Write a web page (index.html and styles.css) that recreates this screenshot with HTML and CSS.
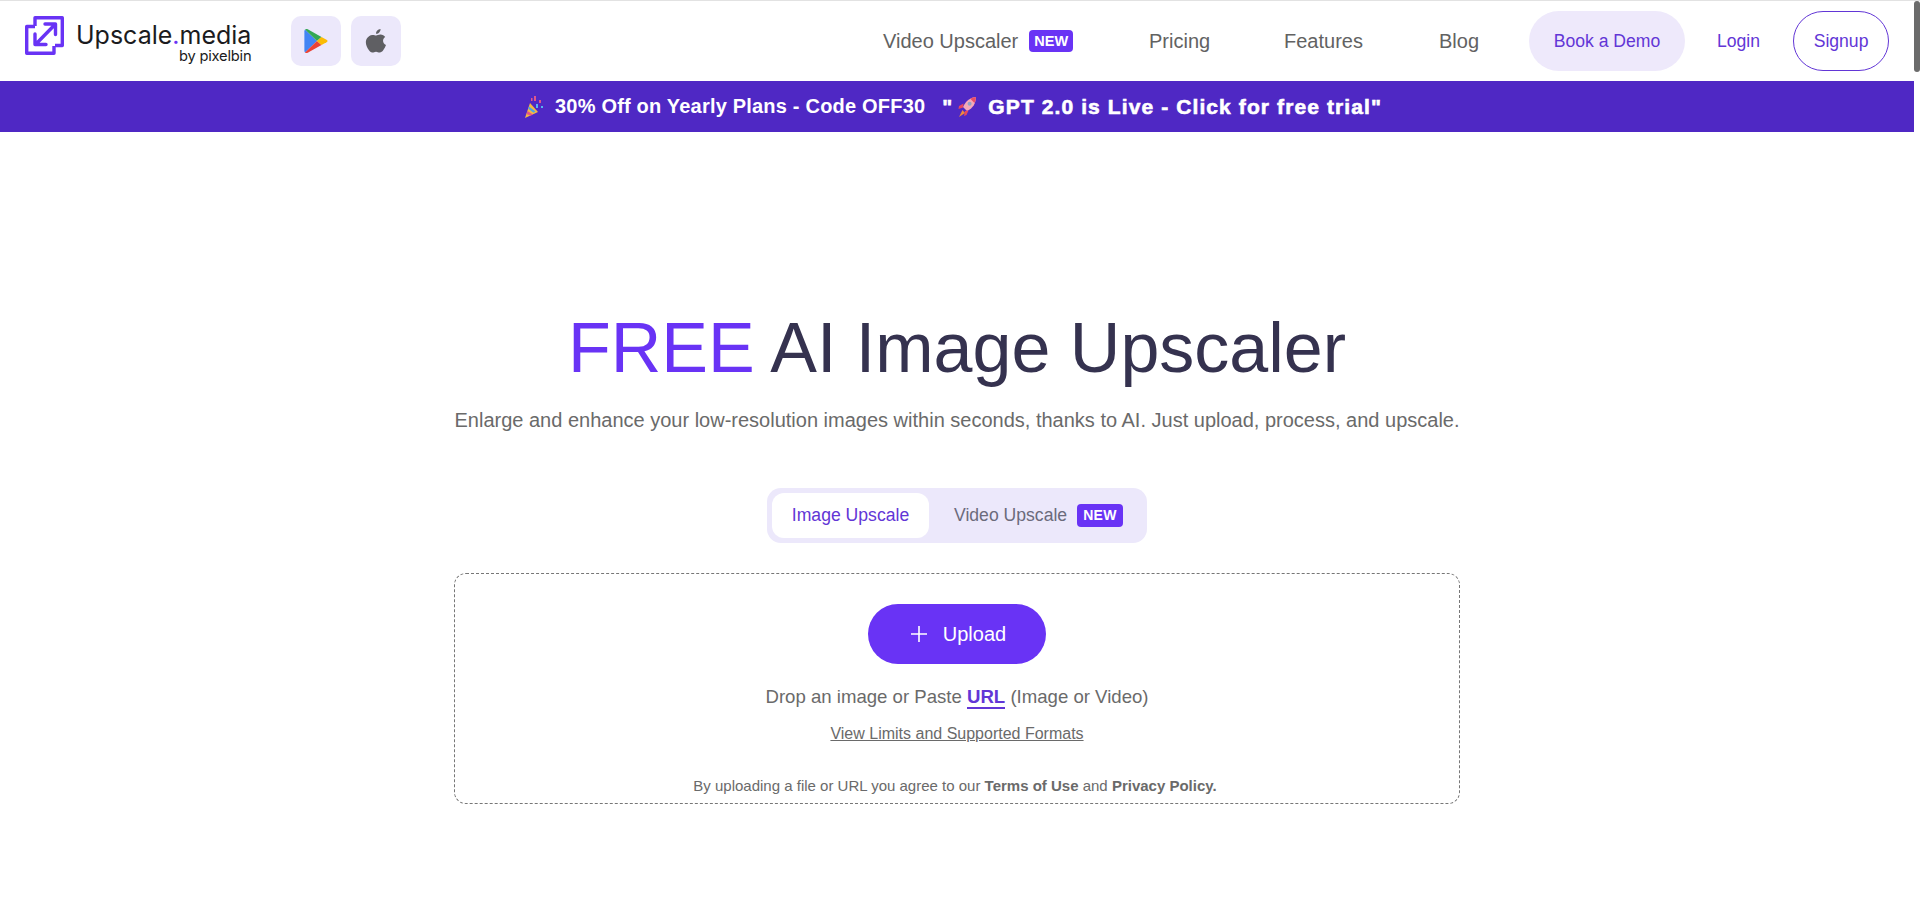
FILE: index.html
```html
<!DOCTYPE html>
<html lang="en">

<head>
  <meta charset="UTF-8">
  <meta name="viewport" content="width=device-width, initial-scale=1.0">
  <title>Upscale.media</title>
  <link rel="stylesheet" href="styles.css">
</head>

<body>
  <div class="window">
    <div class="page">
      <header class="topbar">
        <div class="brand">
          <svg class="brand-icon" viewBox="0 0 39 39" fill="none" stroke="#6933f5" stroke-width="3.400" stroke-linejoin="round">
            <path d="M10 10V1.700H37.300V29.500H30"/>
            <path d="M10 10.500H1.700V37.300H29V30"/>
            <path d="M20 8H30.500V18.500M30 8.500L10.500 28.500M10 18V28.500H21" stroke-linecap="round"/>
          </svg>
          <div class="brand-text">
            <span class="brand-name">Upscale<span class="brand-dot">.</span>media</span>
            <span class="brand-by">by pixelbin</span>
          </div>
        </div>
        <div class="stores">
          <a class="store-btn">
            <svg viewBox="0 0 24 26" width="24" height="26">
              <path d="M1 1.500C.6 2 .4 2.500 .4 3.200V22.800C.4 23.500 .6 24 1 24.500L13 13Z" fill="#4285f4"/>
              <path d="M1 1.500C1.700 .8 2.700 .7 3.700 1.300L17.500 9L13 13Z" fill="#34a853"/>
              <path d="M1 24.500C1.700 25.200 2.700 25.300 3.700 24.700L17.500 17L13 13Z" fill="#ea4335"/>
              <path d="M17.500 9L22.500 11.800C24 12.700 24 13.300 22.500 14.200L17.500 17L13 13Z" fill="#fbbc04"/>
            </svg>
          </a>
          <a class="store-btn">
            <svg viewBox="0 0 22 26" width="22" height="26">
              <path d="M15.500 1C15.700 3.500 13.500 6 11 5.800C10.800 3.500 13 1.200 15.500 1Z" fill="#5f5f63"/>
              <path d="M11.200 7.600C12.200 7.600 13.600 6.500 15.600 6.600C17.500 6.700 19.200 7.500 20.200 9C17 11 17.500 15.600 21 17C20.300 19 19.400 20.700 18.200 22.300C17.200 23.600 16.100 24.700 14.600 24.600C13.100 24.500 12.600 23.700 11 23.700C9.400 23.700 8.800 24.500 7.400 24.600C5.900 24.700 4.800 23.400 3.800 22.100C1.100 18.500 -.4 13.500 2.200 10C3.400 8.300 5.200 7 7.200 6.900C8.900 6.800 10.200 7.600 11.200 7.600Z" fill="#5f5f63"/>
            </svg>
          </a>
        </div>
        <nav class="nav">
          <a class="nav-link nav-video">Video Upscaler <span class="badge">NEW</span></a>
          <a class="nav-link nav-pricing">Pricing</a>
          <a class="nav-link nav-features">Features</a>
          <a class="nav-link nav-blog">Blog</a>
        </nav>
        <div class="actions">
          <a class="btn-demo">Book a Demo</a>
          <a class="btn-login">Login</a>
          <a class="btn-signup">Signup</a>
        </div>
      </header>

      <div class="promo">
        <svg class="emoji" viewBox="0 0 20 24" width="20" height="24">
          <path d="M1 23L6 8L14 17Z" fill="#f5b942"/>
          <path d="M3.500 16L9 19.500L6.500 20.700L2.500 19Z" fill="#e0568a"/>
          <path d="M5 11.500L11.500 16.500L9.500 17.800L4.300 13.800Z" fill="#4aa3e8"/>
          <path d="M10 1h2v5h-2zM15 5h2v3h-2zM7 3h1.500v3H7z" fill="#e0568a"/>
          <path d="M12 9h2v4h-2zM17 11h2v2h-2z" fill="#55b6ef"/>
        </svg>
        <span class="promo-offer">30% Off on Yearly Plans - Code OFF30</span>
        <span class="promo-gpt">"<svg class="emoji emoji-rocket" viewBox="0 0 20 22" width="20" height="22">
            <path d="M19 1C13.500 1.500 9 4.500 6 11L10 15C16.500 12 18.700 7 19 1Z" fill="#f4a9b8"/>
            <path d="M19 1C17 1.200 15 1.800 13.300 2.800L17.500 7C18.400 5.200 18.900 3.200 19 1Z" fill="#ea4d68"/>
            <circle cx="12.600" cy="7.700" r="2" fill="#8fa3c8"/>
            <path d="M6.500 7.500L2 10L1.500 13L6 11.500ZM11.500 14.500L9.500 19L7 20L8 15Z" fill="#e8475f"/>
            <path d="M5.500 14L2 21L8 17Z" fill="#f08a3c"/>
          </svg>GPT 2.0 is Live - Click for free trial"</span>
      </div>

      <main class="hero">
        <h1 class="hero-title"><span class="accent">FREE</span> AI Image Upscaler</h1>
        <p class="hero-sub">Enlarge and enhance your low-resolution images within seconds, thanks to AI. Just upload, process, and upscale.</p>

        <div class="tabs">
          <a class="tab tab-active">Image Upscale</a>
          <a class="tab">Video Upscale <span class="badge badge-tab">NEW</span></a>
        </div>

        <section class="dropzone">
          <button class="upload-btn">
            <svg viewBox="0 0 18 18" width="18" height="18" stroke="#fff" stroke-width="1.600" fill="none">
              <path d="M9 1V17M1 9H17"/>
            </svg>
            Upload
          </button>
          <p class="drop-text">Drop an image or Paste <a class="drop-url">URL</a> (Image or Video)</p>
          <a class="limits">View Limits and Supported Formats</a>
          <p class="terms">By uploading a file or URL you agree to our <b>Terms of Use</b> and <b>Privacy Policy.</b></p>
        </section>
      </main>
    </div>
    <aside class="scrollbar">
      <div class="scrollbar-thumb"></div>
    </aside>
  </div>
</body>

</html>
```

FILE: styles.css
```css
* {
  box-sizing: border-box;
}

html, body {
  margin: 0;
  padding: 0;
  height: 100%;
}

body {
  font-family: 'Liberation Sans', Arial, sans-serif;
  background-color: #fff;
  color: #6a6a6a;
  overflow: hidden;
}

a {
  text-decoration: none;
  color: inherit;
}

.window {
  display: flex;
  height: 912px;
  border-top: 1px solid #e2e2e2;
}

.page {
  flex: 1;
  min-width: 0;
}

.scrollbar {
  width: 6px;
  background-color: #fff;
}

.scrollbar-thumb {
  height: 71px;
  background-color: #6b6b6b;
  border-radius: 3px;
}

/* top bar */
.topbar {
  display: flex;
  align-items: center;
  height: 80px;
  padding-left: 25px;
}

.brand {
  display: flex;
  align-items: flex-start;
  width: 266px;
  height: 50px;
}

.brand-icon {
  width: 39px;
  height: 39px;
  margin-right: 12px;
}

.brand-text {
  display: flex;
  flex-direction: column;
  align-items: flex-end;
  font-family: 'Inter', sans-serif;
  color: #1b1b20;
}

.brand-name {
  font-size: 25px;
  line-height: 31px;
  margin-top: 4px;
}

.brand-dot {
  color: #6933f5;
}

.brand-by {
  font-size: 14.700px;
  line-height: 16px;
  letter-spacing: -.2px;
  margin-top: -3px;
}

.stores {
  display: flex;
  gap: 10px;
}

.store-btn {
  display: flex;
  align-items: center;
  justify-content: center;
  width: 50px;
  height: 50px;
  background-color: #ece8fb;
  border-radius: 10px;
}

.nav {
  display: flex;
  align-items: center;
  margin-left: 482px;
  font-size: 20px;
  color: #626262;
}

.nav-link {
  display: flex;
  align-items: center;
}

.nav-video {
  gap: 11px;
  width: 266px;
}

.nav-pricing {
  width: 135px;
}

.nav-features {
  width: 155px;
}

.nav-blog {
  width: 90px;
}

.badge {
  display: inline-block;
  background-color: #6933f5;
  color: #fff;
  font-size: 14.500px;
  font-weight: 700;
  line-height: 22px;
  padding: 0 5px;
  border-radius: 4px;
}

.actions {
  display: flex;
  align-items: center;
  font-size: 17.600px;
  color: #6236d6;
}

.btn-demo {
  display: flex;
  align-items: center;
  justify-content: center;
  width: 156px;
  height: 60px;
  background-color: #eee9fb;
  border-radius: 30px;
}

.btn-login {
  margin: 0 33px 0 32px;
}

.btn-signup {
  display: flex;
  align-items: center;
  justify-content: center;
  width: 96px;
  height: 60px;
  border: 1px solid #6236d6;
  border-radius: 30px;
}

/* promo strip */
.promo {
  display: flex;
  align-items: center;
  justify-content: center;
  height: 51px;
  padding-right: 8px;
  background-color: #4f28c4;
  color: #fff;
  font-size: 20px;
  font-weight: 700;
}

.emoji {
  display: inline-block;
  vertical-align: -4px;
}

.emoji-rocket {
  margin: 0 11px 0 4px;
}

.promo-offer {
  margin-left: 11px;
  letter-spacing: .2px;
}

.promo-gpt {
  margin-left: 17px;
  font-size: 21px;
  letter-spacing: 1.100px;
  -webkit-text-stroke: .6px #fff;
}

/* hero */
.hero {
  display: flex;
  flex-direction: column;
  align-items: center;
  padding-top: 176px;
}

.hero-title {
  margin: 0;
  font-size: 70px;
  line-height: 80px;
  font-weight: 400;
  color: #35324f;
}

.accent {
  color: #6933f5;
}

.hero-sub {
  margin: 18px 0 0;
  font-size: 20px;
  line-height: 28px;
}

.tabs {
  display: flex;
  align-items: center;
  margin-top: 54px;
  width: 380px;
  height: 55px;
  padding: 5px;
  background-color: #ece8fb;
  border-radius: 14px;
  font-size: 17.600px;
}

.tab {
  display: flex;
  align-items: center;
  justify-content: center;
  height: 45px;
  color: #6b6b7b;
  gap: 10px;
  padding: 0 25px;
  white-space: nowrap;
}

.tab-active {
  flex-shrink: 0;
  width: 157px;
  padding: 0;
  background-color: #fff;
  border-radius: 12px;
  color: #6236d6;
}

.badge-tab {
  font-size: 14px;
  letter-spacing: .3px;
  line-height: 23px;
  padding: 0 6px;
}

.dropzone {
  display: flex;
  flex-direction: column;
  align-items: center;
  width: 1006px;
  height: 231px;
  margin-top: 30px;
  padding-top: 30px;
  border: 1px dashed #777;
  border-radius: 12px;
}

.upload-btn {
  display: flex;
  align-items: center;
  justify-content: center;
  gap: 15px;
  width: 178px;
  height: 60px;
  padding: 0 0 0 2px;
  background-color: #6933f5;
  color: #fff;
  border: 0;
  border-radius: 30px;
  font-family: inherit;
  font-size: 20px;
}

.drop-text {
  margin: 21px 0 0;
  font-size: 18.600px;
  line-height: 24px;
}

.drop-url {
  color: #6236d6;
  font-weight: 700;
  border-bottom: 2px solid #6236d6;
}

.limits {
  margin-top: 15px;
  font-size: 16px;
  line-height: 20px;
  text-decoration: underline;
}

.terms {
  margin: 32px 0 0;
  padding-right: 4px;
  font-size: 15px;
  line-height: 20px;
}
```
